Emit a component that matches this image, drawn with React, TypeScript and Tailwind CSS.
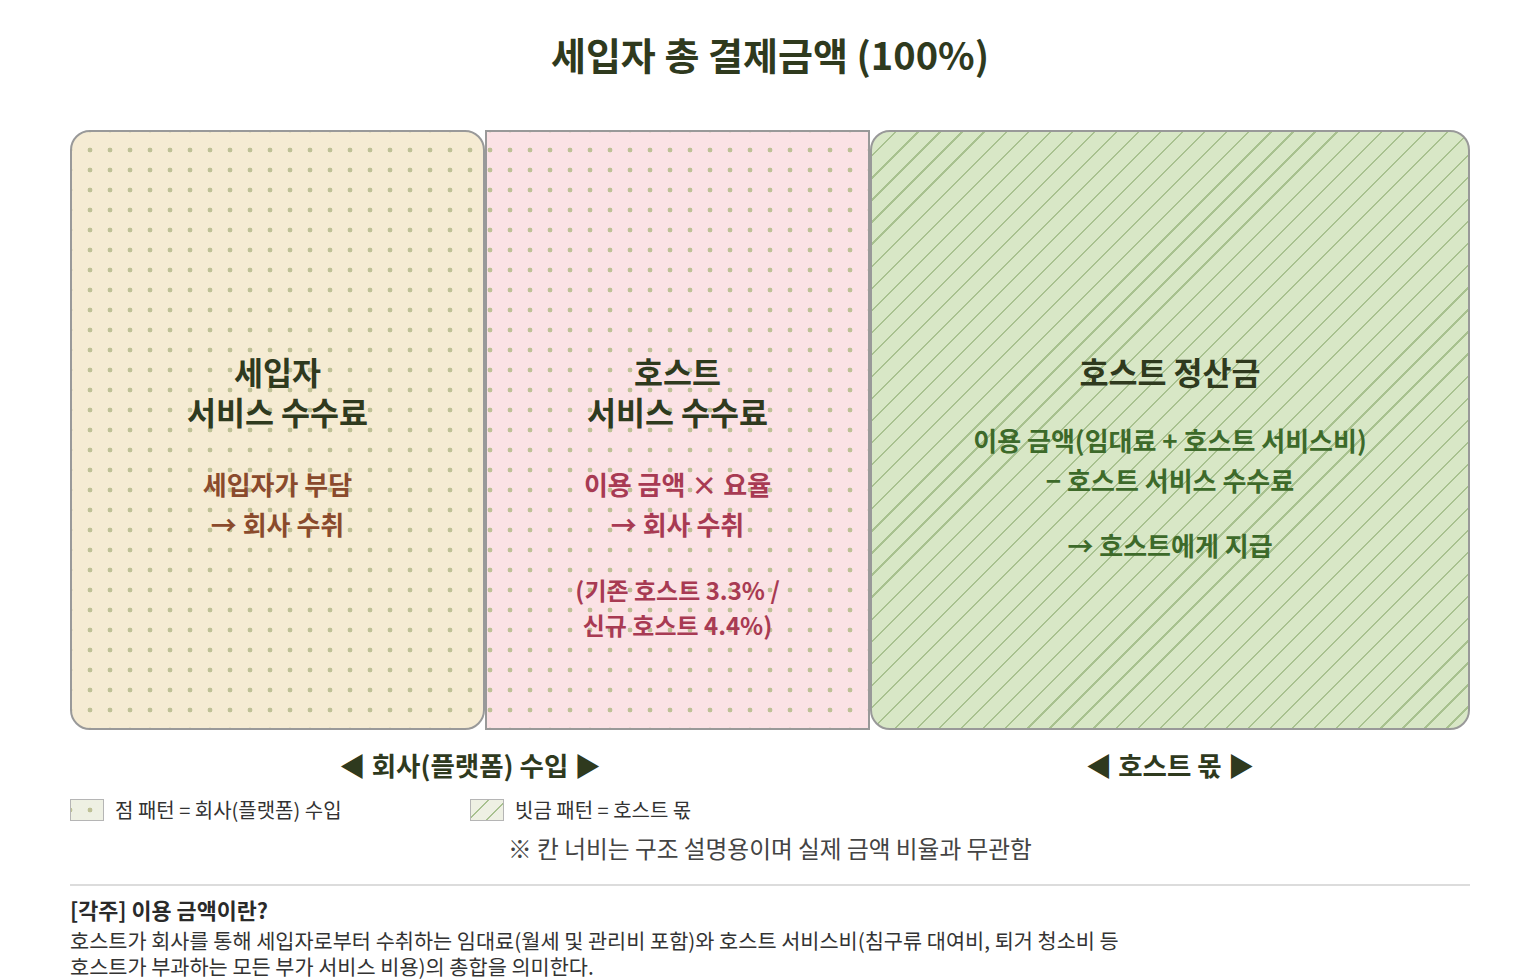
import React from "react";

const dots =
  "bg-[radial-gradient(circle,#bec196_2.1px,transparent_2.7px)] bg-[length:20px_20px] bg-fixed";
const hatch =
  "bg-[repeating-linear-gradient(-45deg,transparent_0px,transparent_14px,#a8c18f_14px,#a8c18f_15.6px)]";

export default function App() {
  return (
    <div className="min-h-[980px] bg-white font-['Noto_Sans_CJK_KR',sans-serif] text-[#2f3a1e]">
      <div className="mx-auto w-[1400px] pt-[29px]">
        <h1 className="text-center text-[38px] font-bold leading-[50px]">
          세입자 총 결제금액 (100%)
        </h1>

        {/* Cards */}
        <div className="mt-[51px] flex h-[600px]">
          <div className={`w-[415px] rounded-[20px] border-2 border-[#999] bg-[#f5ebd3] ${dots}`}>
            <div className="flex flex-col items-center pt-[219px] text-center">
              <div className="text-[31.5px] font-bold leading-[40px]">
                세입자
                <br />
                서비스 수수료
              </div>
              <div className="mt-[33px] text-[26px] font-bold leading-[40px] text-[#8a4a2c]">
                세입자가 부담
                <br />→ 회사 수취
              </div>
            </div>
          </div>

          <div className={`w-[385px] border-2 border-[#999] bg-[#fbe2e5] ${dots}`}>
            <div className="flex flex-col items-center pt-[219px] text-center">
              <div className="text-[31.5px] font-bold leading-[40px]">
                호스트
                <br />
                서비스 수수료
              </div>
              <div className="mt-[33px] text-[26px] font-bold leading-[40px] text-[#a83a53]">
                이용 금액 × 요율
                <br />→ 회사 수취
              </div>
              <div className="mt-[28px] text-[24px] font-bold leading-[35px] text-[#a83a53]">
                (기존 호스트 3.3% /
                <br />
                신규 호스트 4.4%)
              </div>
            </div>
          </div>

          <div className={`w-[600px] rounded-[20px] border-2 border-[#999] bg-[#d8e7c6] ${hatch}`}>
            <div className="flex flex-col items-center pt-[219px] text-center">
              <div className="text-[31.5px] font-bold leading-[40px]">호스트 정산금</div>
              <div className="mt-[29px] text-[26px] font-bold leading-[40px] text-[#3d6a2a]">
                이용 금액(임대료 + 호스트 서비스비)
                <br />− 호스트 서비스 수수료
              </div>
              <div className="mt-[25px] text-[26px] font-bold leading-[40px] text-[#3d6a2a]">
                → 호스트에게 지급
              </div>
            </div>
          </div>
        </div>

        {/* Group labels */}
        <div className="mt-[18px] flex text-[26.5px] font-bold leading-[34px]">
          <div className="w-[800px] text-center">◀ 회사(플랫폼) 수입 ▶</div>
          <div className="w-[600px] text-center">◀ 호스트 몫 ▶</div>
        </div>

        {/* Legend */}
        <div className="mt-[15px] flex text-[20px] leading-[26px] text-[#333]">
          <div className="flex w-[400px] items-center gap-[11px]">
            <span className={`h-[22px] w-[34px] border border-[#b5b5b5] bg-[#eef0e3] ${dots}`} />
            <span>점 패턴 = 회사(플랫폼) 수입</span>
          </div>
          <div className="flex items-center gap-[11px]">
            <span className="h-[22px] w-[34px] border border-[#b5b5b5] bg-[#eef0e3] bg-[repeating-linear-gradient(-45deg,transparent_0px,transparent_11px,#a8c18f_11px,#a8c18f_12.6px)]" />
            <span>빗금 패턴 = 호스트 몫</span>
          </div>
        </div>

        <p className="mt-[10px] text-center text-[23.7px] leading-[30px] text-[#444]">
          ※ 칸 너비는 구조 설명용이며 실제 금액 비율과 무관함
        </p>

        <div className="mt-[21px] h-[2px] bg-[#dcdcdc]" />

        {/* Footnote */}
        <div className="mt-[10px] text-[#333]">
          <div className="text-[21.8px] font-bold leading-[28px] text-[#2a2a2a]">
            [각주] 이용 금액이란?
          </div>
          <p className="mt-[3px] text-[20.8px] leading-[26px]">
            호스트가 회사를 통해 세입자로부터 수취하는 임대료(월세 및 관리비 포함)와 호스트 서비스비(침구류 대여비, 퇴거 청소비 등
            <br />
            호스트가 부과하는 모든 부가 서비스 비용)의 총합을 의미한다.
          </p>
        </div>
      </div>
    </div>
  );
}
